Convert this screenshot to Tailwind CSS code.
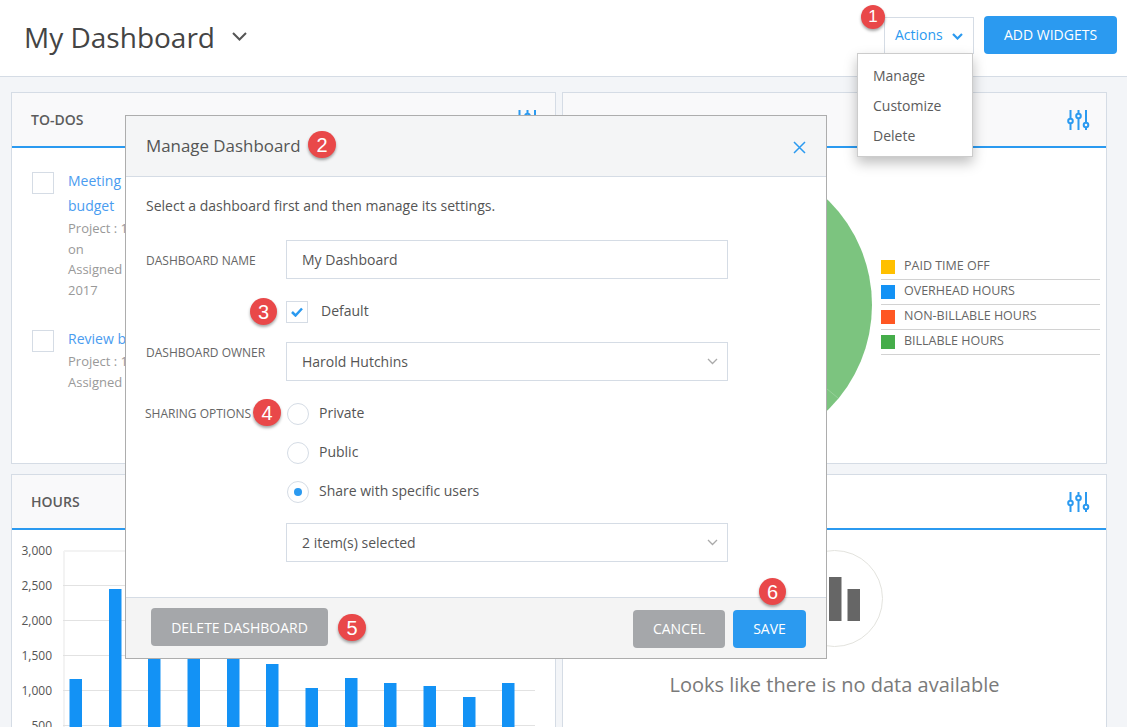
<!DOCTYPE html>
<html lang="en">
<head>
  <meta charset="UTF-8" />
  <title>My Dashboard</title>
  <script src="https://cdn.jsdelivr.net/npm/@tailwindcss/browser@4"></script>
</head>
<body class="relative w-[1127px] h-[727px] overflow-hidden bg-[#f3f5f8] font-['Open_Sans',sans-serif] text-[#555]">

  <!-- top bar -->
  <header class="h-[77px] bg-white border-b border-[#d5dce5] flex items-start justify-between pl-[24px] pr-[10px]">
    <div class="flex items-center h-[74px]">
      <h1 class="text-[28px] leading-none text-[#444]">My Dashboard</h1>
      <svg class="ml-[17px] mt-[-1px]" width="15" height="9" viewBox="0 0 15 9" fill="none" stroke="#555" stroke-width="2"><path d="M1 1l6.500 6.500L14 1" /></svg>
    </div>
    <div class="flex items-start pt-4 gap-[10px]">
      <button class="mt-px w-[90px] h-[37px] bg-white border border-[#d5dce5] flex items-center pl-[10px] pb-[2px] text-sm text-[#2b9af0]">
        Actions
        <svg class="ml-[9px] mt-[4px]" width="11" height="7" viewBox="0 0 11 7" fill="none" stroke="#2b9af0" stroke-width="2.200"><path d="M1 1l4.500 4.500L10 1" /></svg>
      </button>
      <button class="w-[133px] h-[38px] bg-[#2b9af0] rounded text-sm font-medium text-white">ADD WIDGETS</button>
    </div>
  </header>

  <main class="w-[1096px] ml-[11px] mt-[15px] grid grid-cols-2 gap-x-[6px] gap-y-[10px]">

    <section class="h-[372px] bg-white border border-[#d5dce5]">
      <div class="h-[55px] bg-[#f9f9fa] border-b-2 border-[#2b9af0] flex items-center justify-between pl-[19px] pr-[16px]">
        <h2 class="text-sm font-semibold text-[#5c5c5c]">TO-DOS</h2>
        <svg width="23" height="20" viewBox="0 0 23 20" fill="none" stroke="#2b9af0" stroke-width="2"><path d="M3.500 0v8M3.500 14v6M11.500 0v3M11.500 9v11M19 0v12M19 18v2" /><circle cx="3.500" cy="11" r="2.300" /><circle cx="11.500" cy="6" r="2.300" /><circle cx="19" cy="15" r="2.300" /></svg>
      </div>
      <div class="pl-5 pt-[23px]">
        <div class="flex gap-[14px]">
          <span class="mt-px w-[22px] h-[22px] border border-[#d5dce5] shrink-0"></span>
          <div class="-mt-[3px] text-[13px] leading-[20.500px] text-[#999]">
            <p class="text-sm leading-[25px] text-[#4a9cf0]">Meeting</p>
            <p class="text-sm leading-[25px] text-[#4a9cf0]">budget</p>
            <p>Project : 1</p>
            <p>on</p>
            <p>Assigned</p>
            <p>2017</p>
          </div>
        </div>
        <div class="flex gap-[14px] mt-[29px]">
          <span class="mt-px w-[22px] h-[22px] border border-[#d5dce5] shrink-0"></span>
          <div class="-mt-[3px] text-[13px] leading-[20.500px] text-[#999]">
            <p class="text-sm leading-[25px] text-[#4a9cf0]">Review b</p>
            <p>Project : 1</p>
            <p>Assigned</p>
          </div>
        </div>
      </div>
    </section>

    <section class="h-[372px] bg-white border border-[#d5dce5]">
      <div class="h-[55px] bg-[#f9f9fa] border-b-2 border-[#2b9af0] flex items-center justify-between pl-5 pr-[16px]">
        <h2 class="text-sm font-semibold text-[#d2d3d5]">TIME PERFORMANCE</h2>
        <svg width="23" height="20" viewBox="0 0 23 20" fill="none" stroke="#2b9af0" stroke-width="2"><path d="M3.500 0v8M3.500 14v6M11.500 0v3M11.500 9v11M19 0v12M19 18v2" /><circle cx="3.500" cy="11" r="2.300" /><circle cx="11.500" cy="6" r="2.300" /><circle cx="19" cy="15" r="2.300" /></svg>
      </div>
      <div class="flex items-start">
        <svg class="ml-[15px] mt-[10px] shrink-0" width="294" height="294" viewBox="0 0 294 294"><circle cx="147" cy="147" r="147" fill="#7cc47f" /><path d="M147 147l113 93" stroke="#fff" stroke-opacity="0.200" /></svg>
        <ul class="ml-[9px] mt-[107px] w-[219px] text-[12.500px] text-[#666]">
          <li class="h-[25px] border-b border-[#d2d2d2] flex items-center gap-[9px] pb-px"><span class="w-[14px] h-[14px] bg-[#ffc000]"></span>PAID TIME OFF</li>
          <li class="h-[25px] border-b border-[#d2d2d2] flex items-center gap-[9px] pb-px"><span class="w-[14px] h-[14px] bg-[#1392f5]"></span>OVERHEAD HOURS</li>
          <li class="h-[25px] border-b border-[#d2d2d2] flex items-center gap-[9px] pb-px"><span class="w-[14px] h-[14px] bg-[#ff5722]"></span>NON-BILLABLE HOURS</li>
          <li class="h-[25px] border-b border-[#d2d2d2] flex items-center gap-[9px] pb-px"><span class="w-[14px] h-[14px] bg-[#45ad4a]"></span>BILLABLE HOURS</li>
        </ul>
      </div>
    </section>

    <section class="h-[300px] bg-white border border-[#d5dce5]">
      <div class="h-[55px] bg-[#f9f9fa] border-b-2 border-[#2b9af0] flex items-center pl-[19px]">
        <h2 class="text-sm font-semibold text-[#5c5c5c]">HOURS</h2>
      </div>
      <svg width="543" height="197" viewBox="12 530 543 197" font-size="12" fill="#555" text-anchor="end">
        <path d="M64 551H535M64 551V727" stroke="#f3f3f3" stroke-width="2" fill="none" />
        <path d="M63 585.500H535M63 620.500H535M63 655.500H535M63 690.500H535M63 725.500H535" stroke="#e2e2e2" fill="none" />
        <text x="52" y="554.500">3,000</text>
        <text x="52" y="589.500">2,500</text>
        <text x="52" y="624.500">2,000</text>
        <text x="52" y="659.500">1,500</text>
        <text x="52" y="694.500">1,000</text>
        <text x="52" y="729.500">500</text>
        <g fill="#1392f5">
          <rect x="69.500" y="679" width="12.500" height="48" />
          <rect x="109" y="589" width="12.500" height="138" />
          <rect x="148" y="640" width="12.500" height="87" />
          <rect x="187.500" y="640" width="12.500" height="87" />
          <rect x="227" y="640" width="12.500" height="87" />
          <rect x="266" y="664" width="12.500" height="63" />
          <rect x="305.500" y="688" width="12.500" height="39" />
          <rect x="345" y="678" width="12.500" height="49" />
          <rect x="384" y="683" width="12.500" height="44" />
          <rect x="423.500" y="686" width="12.500" height="41" />
          <rect x="463" y="697" width="12.500" height="30" />
          <rect x="502" y="683" width="12.500" height="44" />
        </g>
      </svg>
    </section>

    <section class="h-[300px] bg-white border border-[#d5dce5]">
      <div class="h-[55px] border-b-2 border-[#2b9af0] flex items-center justify-end pr-[16px]">
        <svg width="23" height="20" viewBox="0 0 23 20" fill="none" stroke="#2b9af0" stroke-width="2"><path d="M3.500 0v8M3.500 14v6M11.500 0v3M11.500 9v11M19 0v12M19 18v2" /><circle cx="3.500" cy="11" r="2.300" /><circle cx="11.500" cy="6" r="2.300" /><circle cx="19" cy="15" r="2.300" /></svg>
      </div>
      <div class="flex flex-col items-center">
        <svg class="mt-5" width="97" height="97" viewBox="0 0 97 97"><circle cx="48.500" cy="48.500" r="48" fill="none" stroke="#e3e3de" /><path d="M23 45h12.500v26H23zM43 27h12.500v44H43zM61.500 39H74v32H61.500z" fill="#666" /></svg>
        <p class="mt-[24px] text-xl leading-7 text-[#7a7a7a]">Looks like there is no data available</p>
      </div>
    </section>
  </main>

  <!-- actions menu -->
  <ul class="absolute left-[857px] top-[53px] w-[116px] h-[104px] bg-white border border-[#ccc] shadow-[0_6px_12px_rgba(0,0,0,0.25)] pl-[15px] pt-[7px] text-sm font-medium leading-[30px] text-[#5c5c5c]">
    <li>Manage</li>
    <li>Customize</li>
    <li>Delete</li>
  </ul>

  <!-- modal -->
  <div class="absolute left-[125px] top-[115px] w-[702px] h-[544px] border border-[#adadad] flex flex-col bg-white">
    <div class="h-[61px] shrink-0 bg-[#f3f4f6]/95 border-b border-[#d5dce5] flex items-center justify-between pl-5 pr-[20px]">
      <h3 class="text-[16.900px] text-[#555]">Manage Dashboard</h3>
      <svg class="mt-[2px]" width="13" height="13" viewBox="0 0 13 13" fill="none" stroke="#2b9af0" stroke-width="1.500"><path d="M1 1l11 11M12 1L1 12" /></svg>
    </div>

    <div class="flex-1 px-5 pt-[19px] text-sm text-[#555]">
      <p class="h-5 leading-5">Select a dashboard first and then manage its settings.</p>

      <div class="mt-6 flex items-center">
        <label class="w-[140px] shrink-0 pt-[2px] text-xs text-[#666]">DASHBOARD NAME</label>
        <div class="w-[442px] h-[39px] border border-[#d5dce5] flex items-center pl-[15px]">My Dashboard</div>
      </div>

      <div class="mt-[22px] ml-[140px] flex items-center gap-[13px]">
        <span class="w-[22px] h-[22px] border border-[#d5dce5] flex items-center justify-center">
          <svg width="12" height="10" viewBox="0 0 12 10" fill="none" stroke="#2b9af0" stroke-width="2.500"><path d="M1 5l3.500 3.500L11 1.500" /></svg>
        </span>
        <span class="pb-[2px]">Default</span>
      </div>

      <div class="mt-[19px] flex items-start">
        <label class="w-[140px] shrink-0 pt-[3px] text-xs text-[#666]">DASHBOARD OWNER</label>
        <div class="w-[442px] h-[39px] border border-[#d5dce5] flex items-center justify-between pl-[15px] pr-[9px]">
          Harold Hutchins
          <svg width="11" height="7" viewBox="0 0 11 7" fill="none" stroke="#aaa" stroke-width="1.300"><path d="M1 1l4.500 4.500L10 1" /></svg>
        </div>
      </div>

      <div class="mt-[22px] flex items-start">
        <label class="w-[141px] shrink-0 -ml-px pt-[3px] text-xs text-[#666]">SHARING OPTIONS</label>
        <div class="ml-px flex flex-col gap-[17px]">
          <div class="flex items-center gap-[10px]"><span class="w-[22px] h-[22px] rounded-full border border-[#d5dce5]"></span><span class="pb-[2px]">Private</span></div>
          <div class="flex items-center gap-[10px]"><span class="w-[22px] h-[22px] rounded-full border border-[#d5dce5]"></span><span class="pb-[2px]">Public</span></div>
          <div class="flex items-center gap-[10px]"><span class="w-[22px] h-[22px] rounded-full border border-[#d5dce5] flex items-center justify-center"><span class="w-2 h-2 rounded-full bg-[#2b9af0]"></span></span><span class="pb-[2px]">Share with specific users</span></div>
        </div>
      </div>

      <div class="mt-5 ml-[140px] w-[442px] h-[39px] border border-[#d5dce5] flex items-center justify-between pl-[15px] pr-[9px]">
        2 item(s) selected
        <svg width="11" height="7" viewBox="0 0 11 7" fill="none" stroke="#aaa" stroke-width="1.300"><path d="M1 1l4.500 4.500L10 1" /></svg>
      </div>
    </div>

    <div class="h-[61px] shrink-0 bg-[#f4f4f4] border-t border-[#d5dce5] flex items-start justify-between pl-[25px] pr-5">
      <button class="mt-[10px] w-[177px] h-[38px] pt-[2px] rounded bg-[#a5a7aa] text-sm font-medium text-white">DELETE DASHBOARD</button>
      <div class="mt-3 flex gap-2">
        <button class="w-[92px] h-[38px] rounded bg-[#a5a7aa] text-sm font-medium text-white">CANCEL</button>
        <button class="w-[73px] h-[38px] rounded bg-[#2b9af0] text-sm font-medium text-white">SAVE</button>
      </div>
    </div>
  </div>

  <!-- numbered callouts -->
  <span class="absolute left-[861px] top-[5px] w-[24px] h-[24px] rounded-full bg-[#e94849] text-white font-['Liberation_Sans',sans-serif] text-[17px] flex items-center justify-center shadow-[0_2px_3px_rgba(0,0,0,0.35)]">1</span>
  <span class="absolute left-[308px] top-[131px] w-[28px] h-[27px] rounded-full bg-[#e94849] text-white font-['Liberation_Sans',sans-serif] text-xl flex items-center justify-center shadow-[0_2px_3px_rgba(0,0,0,0.35)]">2</span>
  <span class="absolute left-[250px] top-[298px] w-[27px] h-[27px] rounded-full bg-[#e94849] text-white font-['Liberation_Sans',sans-serif] text-xl flex items-center justify-center shadow-[0_2px_3px_rgba(0,0,0,0.35)]">3</span>
  <span class="absolute left-[253px] top-[399px] w-[28px] h-[27px] rounded-full bg-[#e94849] text-white font-['Liberation_Sans',sans-serif] text-xl flex items-center justify-center shadow-[0_2px_3px_rgba(0,0,0,0.35)]">4</span>
  <span class="absolute left-[338px] top-[614px] w-[28px] h-[27px] rounded-full bg-[#e94849] text-white font-['Liberation_Sans',sans-serif] text-xl flex items-center justify-center shadow-[0_2px_3px_rgba(0,0,0,0.35)]">5</span>
  <span class="absolute left-[759px] top-[578px] w-[27px] h-[27px] rounded-full bg-[#e94849] text-white font-['Liberation_Sans',sans-serif] text-xl flex items-center justify-center shadow-[0_2px_3px_rgba(0,0,0,0.35)]">6</span>
</body>
</html>
